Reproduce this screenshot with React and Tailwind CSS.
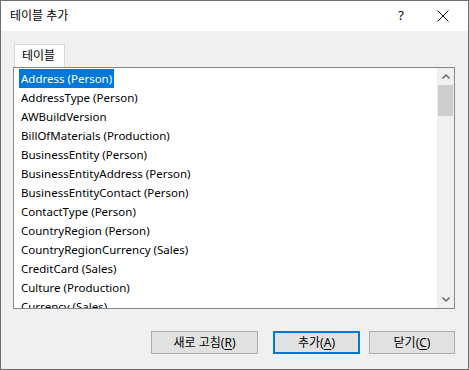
import React from "react";

const tables = [
  "Address (Person)",
  "AddressType (Person)",
  "AWBuildVersion",
  "BillOfMaterials (Production)",
  "BusinessEntity (Person)",
  "BusinessEntityAddress (Person)",
  "BusinessEntityContact (Person)",
  "ContactType (Person)",
  "CountryRegion (Person)",
  "CountryRegionCurrency (Sales)",
  "CreditCard (Sales)",
  "Culture (Production)",
  "Currency (Sales)",
];

const font = "font-['Segoe_UI','Noto_Sans','Noto_Sans_CJK_KR',sans-serif]";

function Button({ label, mnemonic, primary, className }) {
  return (
    <button
      className={
        "h-[23px] bg-[#e1e1e1] text-[12px] text-black flex items-center justify-center " +
        (primary ? "border-2 border-[#0078d7] " : "border border-[#adadad] ") +
        className
      }
    >
      {label}(<span className="underline underline-offset-2">{mnemonic}</span>)
    </button>
  );
}

export default function App() {
  return (
    <div className={`w-[469px] h-[370px] border border-[#6f6f6f] bg-[#f0f0f0] flex flex-col ${font}`}>
      {/* title bar */}
      <div className="h-[30px] bg-white flex items-center shrink-0">
        <span className="ml-[9px] text-[12px] text-black">테이블 추가</span>
        <span className="ml-auto mr-[33px] text-[13px] text-black">?</span>
        <svg width="12" height="12" viewBox="0 0 12 12" className="mr-[19px]">
          <path d="M0.5 0.5 L11.5 11.5 M11.5 0.5 L0.5 11.5" stroke="#111" strokeWidth="1" />
        </svg>
      </div>

      <div className="flex-1 flex flex-col pl-[12px] pr-[13px] pt-[13px]">
        {/* tab */}
        <div className="flex">
          <div className="h-[23px] w-[51px] bg-white border border-b-0 border-[#d9d9d9] flex items-center pl-[7px] text-[12px] text-black ml-[1px]">
            테이블
          </div>
        </div>

        {/* list */}
        <div className="h-[242px] bg-white border border-[#828790] flex">
          <div className="flex-1 pt-[1px] pl-[5px] overflow-hidden">
            {tables.map((t, i) => (
              <div key={t} className="h-[19px] flex items-center">
                <span
                  className={
                    "px-[2px] h-[19px] flex items-center text-[11.5px] " +
                    (i === 0 ? "bg-[#0078d7] text-white" : "text-black")
                  }
                >
                  {t}
                </span>
              </div>
            ))}
          </div>
          <div className="w-[17px] bg-[#f0f0f0] flex flex-col items-center">
            <div className="h-[17px] w-full flex items-center justify-center">
              <svg width="8" height="5" viewBox="0 0 8 5">
                <path d="M0.5 4.5 L4 1 L7.5 4.5" fill="none" stroke="#606060" strokeWidth="1.4" />
              </svg>
            </div>
            <div className="w-[15px] h-[31px] bg-[#cdcdcd]" />
            <div className="flex-1" />
            <div className="h-[17px] w-full flex items-center justify-center">
              <svg width="8" height="5" viewBox="0 0 8 5">
                <path d="M0.5 0.5 L4 4 L7.5 0.5" fill="none" stroke="#606060" strokeWidth="1.4" />
              </svg>
            </div>
          </div>
        </div>

        {/* buttons */}
        <div className="flex justify-end mt-[22px]">
          <Button label="새로 고침" mnemonic="R" className="w-[107px]" />
          <Button label="추가" mnemonic="A" primary className="w-[87px] ml-[15px]" />
          <Button label="닫기" mnemonic="C" className="w-[86px] ml-[9px]" />
        </div>
      </div>
    </div>
  );
}
